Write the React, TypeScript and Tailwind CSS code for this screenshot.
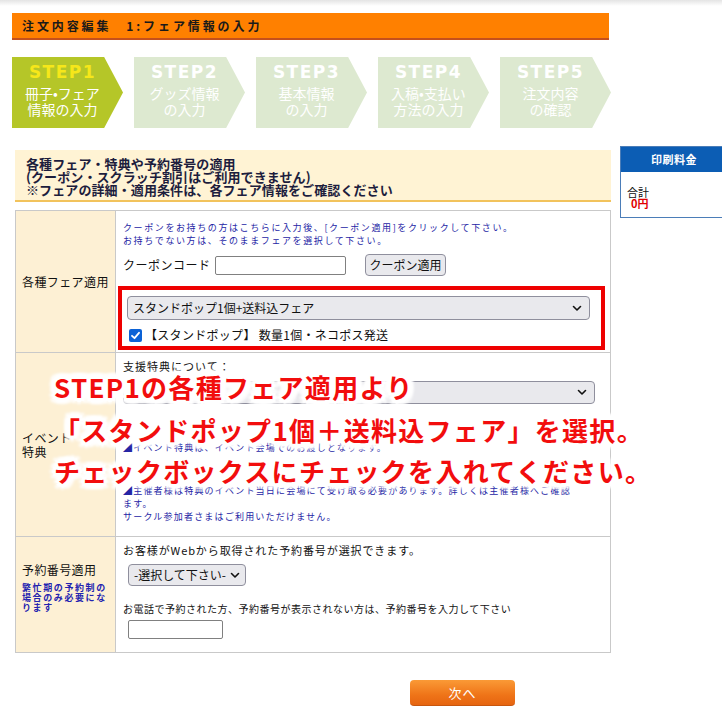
import React from "react";

const steps = [
  { label: "STEP1", l1: "冊子•フェア", l2: "情報の入力", active: true },
  { label: "STEP2", l1: "グッズ情報", l2: "の入力", active: false },
  { label: "STEP3", l1: "基本情報", l2: "の入力", active: false },
  { label: "STEP4", l1: "入稿•支払い", l2: "方法の入力", active: false },
  { label: "STEP5", l1: "注文内容", l2: "の確認", active: false },
];

function Chevron() {
  return (
    <svg width="10" height="7" viewBox="0 0 10 7" className="shrink-0">
      <path d="M1.5 1.5 L5 5 L8.5 1.5" fill="none" stroke="#111" strokeWidth="1.6" strokeLinecap="round" strokeLinejoin="round" />
    </svg>
  );
}

export default function App() {
  return (
    <div className="relative w-[722px] h-[722px] overflow-hidden bg-[linear-gradient(to_bottom,#e4e4e4_0px,#ffffff_6px)] font-['Noto_Sans_CJK_JP','Noto_Sans',sans-serif] text-[#111]">
      <div className="flex">
        {/* main column */}
        <div className="w-[611px] shrink-0 pl-[12px] pt-[13px]">
          {/* header bar */}
          <div className="w-[597px] h-[27px] bg-[#ff8000] border-b-[2px] border-[#c5501c] flex items-center pl-[10px]">
            <span className="text-[12px] font-bold tracking-[2.9px] text-[#1a1a1a] leading-none">注文内容編集　1:フェア情報の入力</span>
          </div>

          {/* steps */}
          <div className="mt-[17px] flex gap-[11px]">
            {steps.map((s) => (
              <div
                key={s.label}
                className={
                  "w-[115px] h-[71px] [clip-path:polygon(0_0,83%_0,100%_50%,83%_100%,0_100%)] flex flex-col " +
                  (s.active ? "bg-[#b5c628]" : "bg-[#dde9d0]")
                }
              >
                <div className="w-[101px] flex flex-col items-center pt-[6px]">
                  <span
                    className={
                      "text-[17px] font-black tracking-[1.5px] leading-[18px] font-['DejaVu_Sans','Noto_Sans',sans-serif] " +
                      (s.active ? "text-[#f6e71a]" : "text-white")
                    }
                  >
                    {s.label}
                  </span>
                  <span className="mt-[5px] text-[14px] leading-[15px] text-white font-['Noto_Sans_CJK_JP',sans-serif]">{s.l1}</span>
                  <span className="text-[14px] leading-[16px] text-white font-['Noto_Sans_CJK_JP',sans-serif]">{s.l2}</span>
                </div>
              </div>
            ))}
          </div>

          {/* info box */}
          <div className="ml-[3px] mt-[22px] w-[596px] h-[52px] bg-[#fff3d4] border-b-[2px] border-[#f2c35c] pl-[11px] pt-[7px]">
            <p className="text-[13px] leading-[13px] font-bold tracking-[0.1px] text-[#1d1d3d]">各種フェア・特典や予約番号の適用</p>
            <p className="text-[13px] leading-[13px] font-bold tracking-[0.1px] text-[#1d1d3d]">(クーポン・スクラッチ割引はご利用できません)</p>
            <p className="text-[13px] leading-[13px] font-bold tracking-[0.1px] text-[#1d1d3d]">※フェアの詳細・適用条件は、各フェア情報をご確認ください</p>
          </div>

          {/* table */}
          <div className="ml-[3px] mt-[8px] w-[596px] border border-[#c9c9c9]">
            {/* row 1 */}
            <div className="flex h-[142px] border-b border-[#c9c9c9]">
              <div className="w-[100px] shrink-0 bg-[#fdf0d4] border-r border-[#c9c9c9] flex items-center pl-[6px]">
                <span className="text-[12px] tracking-[0.4px]">各種フェア適用</span>
              </div>
              <div className="flex-1 flex flex-col">
                <div className="pl-[7px] pt-[10px] text-[9px] leading-[13px] tracking-[1.6px] text-[#2525a5]">
                  <p>クーポンをお持ちの方はこちらに入力後、[クーポン適用]をクリックして下さい。</p>
                  <p>お持ちでない方は、そのままフェアを選択して下さい。</p>
                </div>
                <div className="flex items-center pl-[7px] mt-[7px]">
                  <span className="text-[12px] tracking-[0.5px] w-[92px]">クーポンコード</span>
                  <div className="w-[131px] h-[19px] border border-[#808080] rounded-[2px] bg-white" />
                  <div className="ml-[19px] w-[81px] h-[22px] bg-[#e9e9ed] border border-[#8f8f9d] rounded-[4px] flex items-center justify-center text-[12px]">クーポン適用</div>
                </div>
                <div className="ml-[2px] mt-[10px] w-[487px] h-[64px] border-[4px] border-[#ee0000] flex flex-col">
                  <div className="ml-[5px] mt-[6px] w-[463px] h-[24px] bg-[#e9e9ed] border border-[#8f8f9d] rounded-[4px] flex items-center justify-between pl-[5px] pr-[7px]">
                    <span className="text-[12px]">スタンドポップ1個+送料込フェア</span>
                    <Chevron />
                  </div>
                  <div className="flex items-center ml-[7px] mt-[6px]">
                    <div className="w-[13px] h-[13px] bg-[#0b62d6] rounded-[2px] flex items-center justify-center">
                      <svg width="11" height="11" viewBox="0 0 11 11">
                        <path d="M2 5.8 L4.5 8.2 L9 2.8" fill="none" stroke="#fff" strokeWidth="1.8" strokeLinecap="round" strokeLinejoin="round" />
                      </svg>
                    </div>
                    <span className="ml-[3px] text-[12px] tracking-[0.3px]">【スタンドポップ】 数量1個・ネコポス発送</span>
                  </div>
                </div>
              </div>
            </div>

            {/* row 2 */}
            <div className="flex h-[184px] border-b border-[#c9c9c9]">
              <div className="w-[100px] shrink-0 bg-[#fdf0d4] border-r border-[#c9c9c9] flex items-center pl-[6px]">
                <span className="text-[12px] leading-[14px] tracking-[0.4px]">イベント<br />特典</span>
              </div>
              <div className="flex-1 flex flex-col pl-[7px]">
                <p className="mt-[7px] text-[11px] leading-[13px] tracking-[1px]">支援特典について：</p>
                <div className="mt-[8px] w-[472px] h-[23px] bg-[#e9e9ed] border border-[#8f8f9d] rounded-[4px] flex items-center justify-end pr-[7px]">
                  <Chevron />
                </div>
                <div className="mt-[37px] text-[9px] leading-[13px] tracking-[1.2px] text-[#2525a5]">
                  <p>◢イベント特典は、イベント会場でのお渡しとなります。</p>
                  <p className="mt-[30px]">◢主催者様は特典のイベント当日に会場にて受け取る必要があります。詳しくは主催者様へご確認</p>
                  <p>ます。</p>
                  <p>サークル参加者さまはご利用いただけません。</p>
                </div>
              </div>
            </div>

            {/* row 3 */}
            <div className="flex h-[115px]">
              <div className="w-[100px] shrink-0 bg-[#fdf0d4] border-r border-[#c9c9c9] flex flex-col justify-center pl-[6px] pb-[14px]">
                <span className="text-[12px] tracking-[0.4px] leading-[16px]">予約番号適用</span>
                <span className="mt-[5px] text-[9px] font-bold leading-[10px] tracking-[1.6px] text-[#2323b0]">繁忙期の予約制の<br />場合のみ必要にな<br />ります</span>
              </div>
              <div className="flex-1 flex flex-col pl-[7px] pt-[6px]">
                <p className="text-[11px] leading-[14px] tracking-[0.9px]">お客様がWebから取得された予約番号が選択できます。</p>
                <div className="ml-[5px] mt-[7px] w-[118px] h-[22px] bg-[#e9e9ed] border border-[#8f8f9d] rounded-[4px] flex items-center justify-between pl-[5px] pr-[5px]">
                  <span className="text-[12px]">-選択して下さい-</span>
                  <Chevron />
                </div>
                <p className="mt-[16px] text-[10px] leading-[13px] tracking-[0.5px]">お電話で予約された方、予約番号が表示されない方は、予約番号を入力して下さい</p>
                <div className="ml-[5px] mt-[5px] w-[95px] h-[19px] border border-[#808080] rounded-[2px] bg-white" />
              </div>
            </div>
          </div>

          {/* next button */}
          <div className="mt-[27px] pl-[398px]">
            <div className="w-[105px] h-[26px] rounded-[4px] bg-[linear-gradient(to_bottom,#fa9a36,#ef7418_60%,#e66510)] border-b border-[#c8560e] flex items-center justify-center text-white text-[13px] tracking-[1px]">
              次へ
            </div>
          </div>
        </div>

        {/* sidebar */}
        <div className="ml-[9px] pt-[146px]">
          <div className="w-[106px] h-[72px] border border-[#4b7db8] bg-white">
            <div className="h-[25px] bg-[#0c5db4] flex items-center pl-[30px]">
              <span className="text-[11px] font-bold text-white tracking-[0.5px]">印刷料金</span>
            </div>
            <div className="pl-[6px] pt-[15px] leading-[11px]">
              <p className="text-[11px]">合計</p>
              <p className="pl-[4px] text-[11px] font-bold text-[#e00000]">0円</p>
            </div>
          </div>
        </div>
      </div>

      {/* annotation overlay */}
      <div className="absolute left-[54px] top-[366px] text-[26px] font-bold leading-[41px] tracking-[1.3px] text-[#f20d0d] font-['Noto_Sans_CJK_JP',sans-serif] whitespace-nowrap [text-shadow:0_0_2px_#fff,4px_0_1px_#fff,-4px_0_1px_#fff,0_4px_1px_#fff,0_-4px_1px_#fff,3px_3px_1px_#fff,-3px_-3px_1px_#fff,3px_-3px_1px_#fff,-3px_3px_1px_#fff,6px_0_3px_#fff,-6px_0_3px_#fff,0_6px_3px_#fff,0_-6px_3px_#fff,5px_5px_3px_#fff,-5px_-5px_3px_#fff,5px_-5px_3px_#fff,-5px_5px_3px_#fff]">
        <p>STEP1の各種フェア適用より</p>
        <p className="mt-[2px]">「スタンドポップ1個＋送料込フェア」を選択。</p>
        <p>チェックボックスにチェックを入れてください。</p>
      </div>
    </div>
  );
}
